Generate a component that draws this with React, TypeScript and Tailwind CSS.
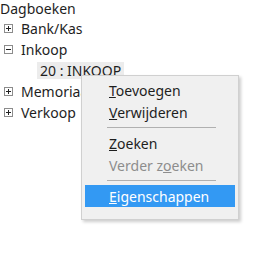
import React from 'react';

const font = { fontFamily: '"Noto Sans", "Open Sans", sans-serif' };

function Box({ open }: { open?: boolean }) {
    return (
        <span className="relative inline-block w-[9px] h-[9px] border border-[#8c8c8c] bg-white mr-2 shrink-0">
            <span className="absolute left-[1px] top-[3px] w-[5px] h-[1px] bg-[#222]" />
            {!open && <span className="absolute left-[3px] top-[1px] w-[1px] h-[5px] bg-[#222]" />}
        </span>
    );
}

function Row({ label, open }: { label: string; open?: boolean }) {
    return (
        <div className="flex items-center h-[21px] pl-[4px]">
            <Box open={open} />
            <span>{label}</span>
        </div>
    );
}

export default function App() {
    return (
        <div className="relative w-[260px] h-[254px] bg-white text-[14px] text-[#1e1e1e] overflow-hidden" style={font}>
            <div>
                <div className="h-[18px] leading-[18px]">Dagboeken</div>
                <Row label="Bank/Kas" />
                <Row label="Inkoop" open />
                <div className="flex items-center h-[21px] pl-[37px]">
                    <span className="px-[3px] bg-[#ececec] leading-[17px]">20 : INKOOP</span>
                </div>
                <Row label="Memoriaal" />
                <Row label="Verkoop" />
            </div>

            {/* context menu */}
            <div className="absolute left-[81px] top-[75px] w-[158px] h-[145px] bg-[#f0f0f0] border border-[#d0d0d0] shadow-[2px_2px_3px_rgba(0,0,0,0.2)] pt-[3px] px-[3px]">
                <div className="h-[22px] flex items-center pl-[24px]"><span><u>T</u>oevoegen</span></div>
                <div className="h-[22px] flex items-center pl-[24px]"><span><u>V</u>erwijderen</span></div>
                <div className="h-[9px] flex items-center pl-[22px] pr-[19px]"><div className="h-[1px] w-full bg-[#b0b0b0]" /></div>
                <div className="h-[22px] flex items-center pl-[24px]"><span><u>Z</u>oeken</span></div>
                <div className="h-[22px] flex items-center pl-[24px] text-[#8d8d8d]"><span>Verder z<u>o</u>eken</span></div>
                <div className="h-[9px] flex items-center pl-[22px] pr-[19px]"><div className="h-[1px] w-full bg-[#b0b0b0]" /></div>
                <div className="h-[22px] flex items-center pl-[24px] bg-[#3399f3] text-white"><span><u>E</u>igenschappen</span></div>
            </div>
        </div>
    );
}
